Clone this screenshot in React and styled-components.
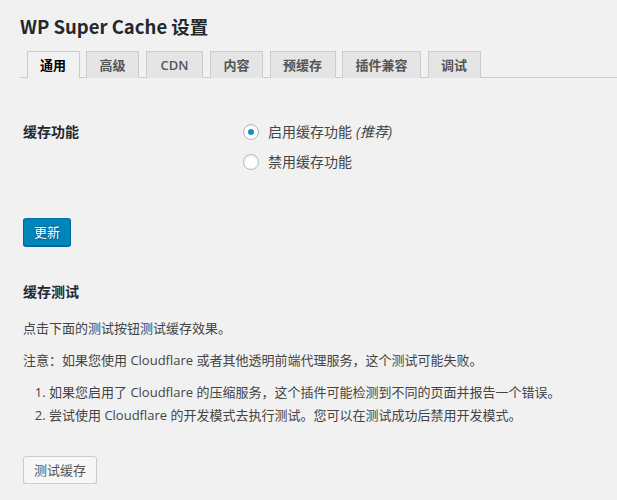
import React from "react";
import styled, { createGlobalStyle, css } from "styled-components";

const GlobalStyle = createGlobalStyle`
  html, body {
    margin: 0;
    padding: 0;
    background: #f1f1f1;
  }
  body {
    font-family: "Open Sans", "Noto Sans CJK SC", sans-serif;
    font-size: 13px;
    color: #444;
  }
  * { box-sizing: border-box; }
`;

const Wrap = styled.div`
  padding: 0 0 0 20px;
`;

const Title = styled.h1`
  margin: 0;
  padding-top: 12px;
  font-family: "Noto Sans CJK SC", "Open Sans", sans-serif;
  font-size: 18.5px;
  line-height: 29px;
  font-weight: 700;
  color: #23282d;
`;

const TabBar = styled.nav`
  display: flex;
  align-items: flex-end;
  margin-top: 10px;
  border-bottom: 1px solid #ccc;
`;

const Tab = styled.a`
  display: block;
  margin-left: 6.5px;
  margin-bottom: -1px;
  height: 27px;
  padding: 0 ${(p) => (p.$latin ? 14 : 12.5)}px;
  border: 1px solid #ccc;
  border-bottom: none;
  font-size: 13px;
  line-height: 26px;
  font-weight: 600;
  text-decoration: none;
  white-space: nowrap;
  background: ${(p) => (p.$active ? "#f1f1f1" : "#e5e5e5")};
  color: ${(p) => (p.$active ? "#000" : "#555")};
`;

const Content = styled.div`
  display: flex;
  flex-direction: column;
  align-items: flex-start;
  padding-left: 3px;
`;

const FormRow = styled.div`
  display: flex;
  margin-top: 44px;
`;

const RowLabel = styled.div`
  width: 220px;
  font-size: 14px;
  line-height: 20px;
  font-weight: 600;
  color: #23282d;
`;

const RadioList = styled.div`
  display: flex;
  flex-direction: column;
  gap: 10px;
`;

const RadioOption = styled.label`
  display: flex;
  align-items: center;
  font-size: 14px;
  line-height: 20px;
  color: #444;

  em {
    margin-left: 4px;
  }
`;

const Radio = styled.input.attrs({ type: "radio" })`
  appearance: none;
  -webkit-appearance: none;
  margin: 0 9px 0 0;
  width: 16px;
  height: 16px;
  border: 1px solid #b4b9be;
  border-radius: 50%;
  background: #fff;
  box-shadow: inset 0 1px 2px rgba(0, 0, 0, 0.1);
  display: inline-flex;
  align-items: center;
  justify-content: center;
  flex: none;

  &:checked::before {
    content: "";
    width: 6px;
    height: 6px;
    border-radius: 50%;
    background: #1e8cbe;
  }
`;

const Button = styled.button`
  display: inline-block;
  height: 28px;
  margin: ${(p) => p.$mt || 0}px 0 0 0;
  padding: 0 10px 1px;
  font-family: inherit;
  font-size: 13px;
  line-height: 26px;
  border-radius: 3px;
  border: 1px solid;
  cursor: pointer;
  white-space: nowrap;
  ${(p) =>
    p.$primary
      ? css`
          background: #0085ba;
          border-color: #0073aa #006799 #006799;
          box-shadow: 0 1px 0 #006799;
          color: #fff;
          text-shadow: 0 -1px 1px #006799, 1px 0 1px #006799,
            0 1px 1px #006799, -1px 0 1px #006799;
        `
      : css`
          background: #f7f7f7;
          border-color: #ccc;
          box-shadow: 0 1px 0 #ccc;
          color: #555;
        `}
`;

const SectionTitle = styled.h3`
  margin: 36px 0 0;
  font-size: 14px;
  line-height: 20px;
  font-weight: 600;
  color: #23282d;
`;

const Para = styled.p`
  margin: ${(p) => p.$mt}px 0 0;
  line-height: 20px;
`;

const List = styled.ol`
  margin: 12px 0 0 26px;
  padding: 0;
  line-height: 20px;

  li + li {
    margin-top: 3px;
  }
`;

const tabs = ["通用", "高级", "CDN", "内容", "预缓存", "插件兼容", "调试"];

export default function App() {
  return (
    <>
      <GlobalStyle />
      <Wrap>
        <Title>WP Super Cache 设置</Title>
        <TabBar>
          {tabs.map((t, i) => (
            <Tab key={t} href="#" $active={i === 0} $latin={/^[A-Z]+$/.test(t)}>
              {t}
            </Tab>
          ))}
        </TabBar>
        <Content>
          <FormRow>
            <RowLabel>缓存功能</RowLabel>
            <RadioList>
              <RadioOption>
                <Radio name="cache" defaultChecked />
                启用缓存功能<em>(推荐)</em>
              </RadioOption>
              <RadioOption>
                <Radio name="cache" />
                禁用缓存功能
              </RadioOption>
            </RadioList>
          </FormRow>
          <Button $primary $mt={46}>更新</Button>
          <SectionTitle>缓存测试</SectionTitle>
          <Para $mt={16}>点击下面的测试按钮测试缓存效果。</Para>
          <Para $mt={12}>
            注意：如果您使用 Cloudflare 或者其他透明前端代理服务，这个测试可能失败。
          </Para>
          <List>
            <li>如果您启用了 Cloudflare 的压缩服务，这个插件可能检测到不同的页面并报告一个错误。</li>
            <li>尝试使用 Cloudflare 的开发模式去执行测试。您可以在测试成功后禁用开发模式。</li>
          </List>
          <Button $mt={31}>测试缓存</Button>
        </Content>
      </Wrap>
    </>
  );
}
